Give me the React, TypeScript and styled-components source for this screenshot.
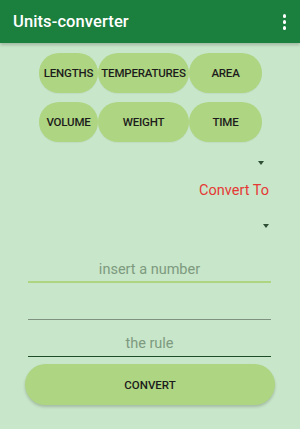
import React, { useState } from "react";
import styled, { createGlobalStyle } from "styled-components";

const GlobalStyle = createGlobalStyle`
  html, body {
    margin: 0;
    padding: 0;
    background: #c8e6c9;
    font-family: Roboto, "Liberation Sans", sans-serif;
  }
`;

const categories = [
  ["LENGTHS", "TEMPERATURES", "AREA"],
  ["VOLUME", "WEIGHT", "TIME"],
];

const App: React.FC = () => {
  const [value, setValue] = useState("");
  const [rule, setRule] = useState("");

  return (
    <Screen>
      <GlobalStyle />
      <AppBar>
        <Title>Units-converter</Title>
        <MenuDots aria-label="menu">
          <span />
          <span />
          <span />
        </MenuDots>
      </AppBar>

      <Content>
        <CategoryGrid>
          {categories.flat().map((name) => (
            <CategoryButton key={name}>{name}</CategoryButton>
          ))}
        </CategoryGrid>

        <SpinnerRow $right={36} $top={14}>
          <Caret />
        </SpinnerRow>
        <ConvertTo>Convert To</ConvertTo>
        <SpinnerRow $right={31} $top={20}>
          <Caret />
        </SpinnerRow>

        <Fields>
          <Field
            $line="#aed581"
            $thick={2}
            placeholder="insert a number"
            value={value}
            onChange={(e) => setValue(e.target.value)}
          />
          <Field $line="#7f917f" $thick={1} readOnly />
          <Field
            $line="#1f4d27"
            $thick={1}
            placeholder="the rule"
            value={rule}
            onChange={(e) => setRule(e.target.value)}
          />
        </Fields>

        <ConvertButton>CONVERT</ConvertButton>
      </Content>
    </Screen>
  );
};

const Screen = styled.div`
  width: 300px;
  height: 429px;
  background: #c8e6c9;
  overflow: hidden;
`;

const AppBar = styled.header`
  height: 43px;
  background: #1b7f3e;
  display: flex;
  align-items: center;
  justify-content: space-between;
  padding: 0 14px 0 13px;
  box-shadow: 0 2px 3px rgba(0, 0, 0, 0.2);
  position: relative;
`;

const Title = styled.h1`
  margin: 0;
  font-size: 16.5px;
  font-weight: 500;
  color: #fff;
  letter-spacing: 0.1px;
`;

const MenuDots = styled.div`
  display: flex;
  flex-direction: column;
  gap: 2.5px;
  margin-top: 1px;

  span {
    width: 3.5px;
    height: 3.5px;
    border-radius: 50%;
    background: #fff;
  }
`;

const Content = styled.main`
  display: flex;
  flex-direction: column;
`;

const CategoryGrid = styled.div`
  display: grid;
  grid-template-columns: 59px 91px 73px;
  grid-auto-rows: 40px;
  row-gap: 9px;
  justify-content: center;
  margin: 10px 0 0 1px;
`;

const CategoryButton = styled.button`
  border: none;
  border-radius: 20px;
  background: #aed581;
  color: #1c1c1c;
  font-family: Roboto, "Liberation Sans", sans-serif;
  font-size: 11.5px;
  font-weight: 500;
  padding: 0;
  white-space: nowrap;
  letter-spacing: -0.2px;
  box-shadow: 0 1px 1px rgba(0, 0, 0, 0.04);
`;

const SpinnerRow = styled.div<{ $right: number; $top: number }>`
  height: 14px;
  display: flex;
  justify-content: flex-end;
  padding-right: ${({ $right }) => $right}px;
  margin-top: ${({ $top }) => $top}px;
`;

const Caret = styled.div`
  width: 0;
  height: 0;
  border-left: 3.5px solid transparent;
  border-right: 3.5px solid transparent;
  border-top: 4px solid #2f4f35;
  margin-top: 5px;
`;

const ConvertTo = styled.div`
  align-self: flex-end;
  margin: 12px 31px 0 0;
  font-size: 14.5px;
  color: #e53935;
  line-height: 17px;
`;

const Fields = styled.div`
  display: flex;
  flex-direction: column;
  gap: 3px;
  padding: 16px 29px 0 28px;
`;

const Field = styled.input<{ $line: string; $thick: number }>`
  height: 34px;
  border: none;
  border-bottom: ${({ $thick, $line }) => `${$thick}px solid ${$line}`};
  background: transparent;
  outline: none;
  text-align: center;
  font-family: Roboto, "Liberation Sans", sans-serif;
  font-size: 14.5px;
  color: #333;
  padding: 8px 0 0;
  box-sizing: border-box;

  &::placeholder {
    color: #7d9a80;
  }
`;

const ConvertButton = styled.button`
  margin: 7px 25px 0;
  height: 41px;
  border: none;
  border-radius: 21px;
  background: #aed581;
  color: #1c1c1c;
  font-family: Roboto, "Liberation Sans", sans-serif;
  font-size: 11.5px;
  font-weight: 500;
  box-shadow: 0 2px 3px rgba(0, 0, 0, 0.18);
`;

export default App;
